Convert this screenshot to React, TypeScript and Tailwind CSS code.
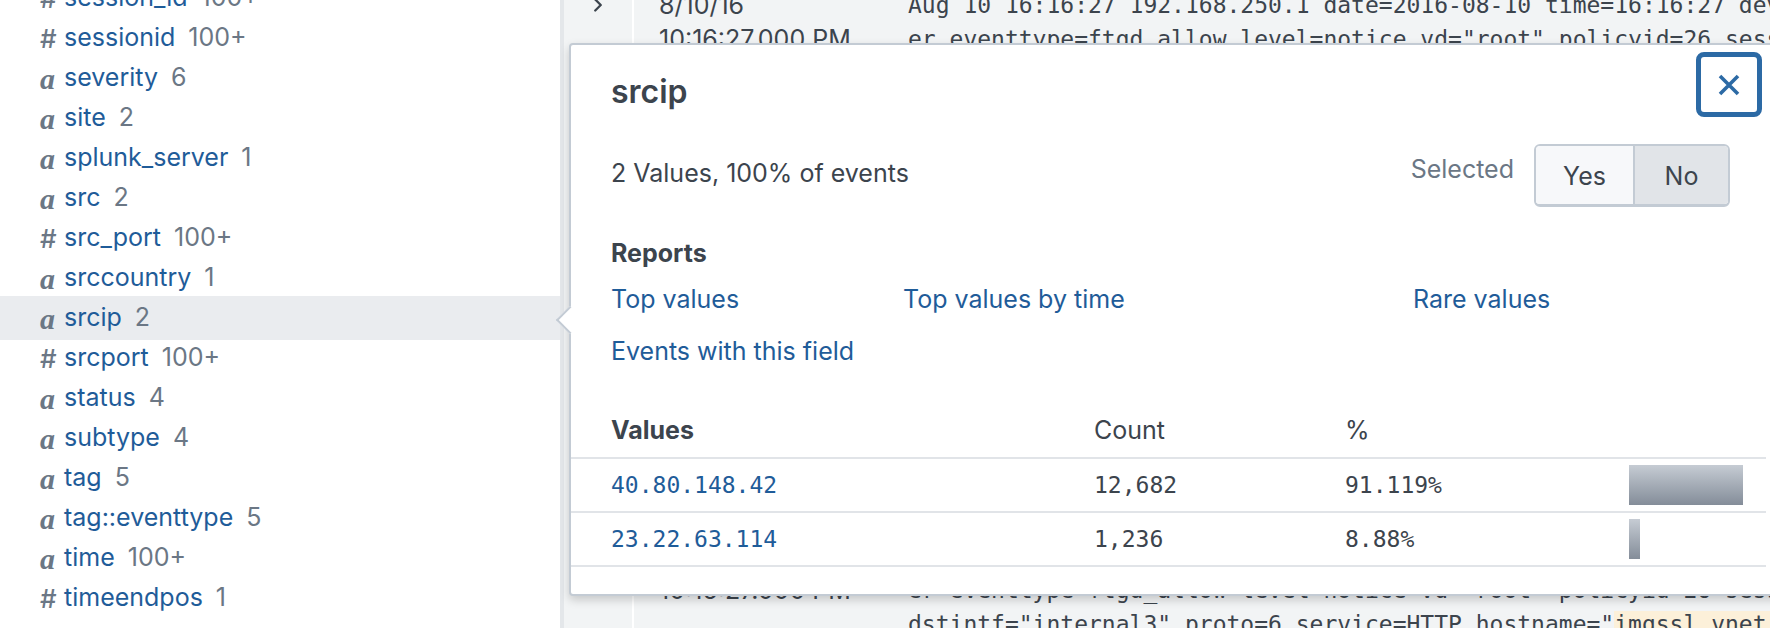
import { ChevronRight } from 'lucide-react'

const fields = [
  { type: '#', name: 'session_id', count: '100+' },
  { type: '#', name: 'sessionid', count: '100+' },
  { type: 'a', name: 'severity', count: '6' },
  { type: 'a', name: 'site', count: '2' },
  { type: 'a', name: 'splunk_server', count: '1' },
  { type: 'a', name: 'src', count: '2' },
  { type: '#', name: 'src_port', count: '100+' },
  { type: 'a', name: 'srccountry', count: '1' },
  { type: 'a', name: 'srcip', count: '2', selected: true },
  { type: '#', name: 'srcport', count: '100+' },
  { type: 'a', name: 'status', count: '4' },
  { type: 'a', name: 'subtype', count: '4' },
  { type: 'a', name: 'tag', count: '5' },
  { type: 'a', name: 'tag::eventtype', count: '5' },
  { type: 'a', name: 'time', count: '100+' },
  { type: '#', name: 'timeendpos', count: '1' },
]

const rawLines = [
  'Aug 10 16:16:27 192.168.250.1 date=2016-08-10 time=16:16:27 devname=FGT60D4614044725 devid=FGT60D4614044725',
  'er eventtype=ftgd_allow level=notice vd="root" policyid=26 sessionid=1285726 user="" srcip=40.80.148.42',
  'srcport=50964 srcintf="internal3" dstip=23.22.63.114 dstport=80 dstintf="wan1" proto=6 service=HTTP',
  'hostname="www.imreallynotbatman.com" profile="default" action=passthrough reqtype=direct',
  'url="/joomla/index.php" sentbyte=482 rcvdbyte=0 direction=outgoing msg="URL belongs to an allowed',
  'category in policy" method=domain cat=52 catdesc="Information Technology"',
  'crscore=0 craction=0 crlevel=low',
  '',
  '',
  '',
  '',
  '',
  '',
  '',
  '',
  '',
  'Aug 10 16:16:26 192.168.250.1 date=2016-08-10 time=16:16:26 devname=FGT60D4614044725 devid=FGT60D4614044725',
  'er eventtype=ftgd_allow level=notice vd="root" policyid=26 sessionid=1285701 user="" srcip=23.22.63.114',
]

const values = [
  { value: '40.80.148.42', count: '12,682', pct: 91.119, label: '91.119%' },
  { value: '23.22.63.114', count: '1,236', pct: 8.88, label: '8.88%' },
]

function TypeIcon({ type }: { type: string }) {
  if (type === '#') {
    return <span className="w-[24px] text-[26px] font-medium text-[#6b7785]">#</span>
  }
  return (
    <span className="w-[24px] font-[family-name:Liberation_Serif,serif] text-[30px] font-bold italic text-[#6b7785]">
      a
    </span>
  )
}

export default function App() {
  return (
    <div className="relative flex h-[628px] w-[1770px] overflow-hidden bg-white font-[family-name:Inter,Liberation_Sans,sans-serif] text-[#3c444d]">
      {/* field sidebar */}
      <aside className="w-[564px] shrink-0 border-r-4 border-[#e4e7ea] bg-white">
        <ul className="-mt-[22px]">
          {fields.map((field) => (
            <li
              key={field.name}
              className={`flex items-center pl-[40px] ${
                field.selected ? '-my-[2px] h-[44px] bg-[#eaecef]' : 'h-[40px]'
              }`}
            >
              <TypeIcon type={field.type} />
              <span className="text-[25px] text-[#1f5c99]">{field.name}</span>
              <span className="ml-[13px] text-[25px] text-[#6b7785]">{field.count}</span>
            </li>
          ))}
        </ul>
      </aside>

      {/* events list behind the popover */}
      <section className="flex flex-1 overflow-hidden bg-[#f2f4f5]">
        <div className="-mt-[12px] w-[70px] shrink-0 border-r-2 border-white">
          {rawLines.map((_, i) => (
            <div key={i} className="flex h-[34.4px] items-center justify-center">
              {(i === 0 || i === 16) && (
                <ChevronRight size={22} strokeWidth={2.5} className="text-[#3c444d]" />
              )}
            </div>
          ))}
        </div>
        <div className="-mt-[12px] w-[274px] shrink-0 pl-[25px] text-[25px]">
          {rawLines.map((_, i) => (
            <div key={i} className="h-[34.4px] whitespace-nowrap leading-[34.4px]">
              {i === 0 || i === 16 ? '8/10/16' : i === 1 || i === 17 ? '10:16:27.000 PM' : ''}
            </div>
          ))}
        </div>
        <div className="-mt-[12px] flex-1 font-[family-name:DejaVu_Sans_Mono,monospace] text-[23px]">
          {rawLines.map((line, i) => (
            <div key={i} className="h-[34.4px] whitespace-nowrap leading-[34.4px]">
              {line}
            </div>
          ))}
          <div className="h-[34.4px] whitespace-nowrap leading-[34.4px]">
            dstintf="internal3" proto=6 service=HTTP hostname="
            <span className="bg-[#fcf0d9]">imgssl.vnet.com</span>" profile="default"
          </div>
        </div>
      </section>

      {/* field summary popover */}
      <div className="absolute left-[569px] top-[43px] flex h-[553px] w-[1215px] flex-col rounded-[4px] border-2 border-[#c3cbd4] bg-white shadow-[0_4px_10px_rgba(0,0,0,0.18)]">
        <div className="absolute left-[-11px] top-[265px] h-[20px] w-[20px] rotate-45 border-b-2 border-l-2 border-[#c3cbd4] bg-white" />

        <div className="flex items-start">
          <h2 className="ml-[40px] mt-[27px] text-[32px] font-semibold leading-[40px]">srcip</h2>
          <button className="ml-auto mr-[20px] mt-[7px] flex h-[65px] w-[66px] items-center justify-center rounded-[8px] border-[5px] border-[#2c6aa5] bg-white">
            <svg width="24" height="24" viewBox="0 0 24 24" fill="none">
              <path d="M3 3 L21 21 M21 3 L3 21" stroke="#2c6aa5" strokeWidth="3.6" />
            </svg>
          </button>
        </div>

        <div className="mt-[27px] flex items-start">
          <p className="ml-[40px] mt-[12px] text-[25px] leading-[34px]">2 Values, 100% of events</p>
          <div className="ml-auto mr-[52px] flex items-start">
            <span className="mr-[20px] mt-[8px] text-[25px] leading-[34px] text-[#6b7785]">Selected</span>
            <div className="flex h-[63px] overflow-hidden rounded-[6px] border-2 border-b-[3px] border-[#c3cbd4] text-[25px]">
              <button className="w-[99px] border-r-2 border-[#c3cbd4] bg-[#f7f8fa] pt-[4px]">Yes</button>
              <button className="w-[93px] bg-[#e1e4e8] pt-[4px]">No</button>
            </div>
          </div>
        </div>

        <h3 className="ml-[40px] mt-[29px] text-[25px] font-bold leading-[34px]">Reports</h3>
        <div className="ml-[40px] mt-[12px] grid grid-cols-[292px_510px_1fr] gap-y-[18px] text-[25px] leading-[34px] text-[#1f5c99]">
          <a>Top values</a>
          <a>Top values by time</a>
          <a>Rare values</a>
          <a>Events with this field</a>
        </div>

        <div className="mr-[16px] mt-[36px]">
          <div className="grid h-[55px] grid-cols-[523px_251px_284px_1fr] items-center border-b-2 border-[#e1e4e8] text-[25px]">
            <span className="pl-[40px] font-bold">Values</span>
            <span>Count</span>
            <span>%</span>
            <span />
          </div>
          {values.map((row) => (
            <div
              key={row.value}
              className="grid h-[54px] grid-cols-[523px_251px_284px_1fr] items-center border-b-2 border-[#e1e4e8] font-[family-name:DejaVu_Sans_Mono,monospace] text-[23px]"
            >
              <span className="pl-[40px] text-[#1f5c99]">{row.value}</span>
              <span>{row.count}</span>
              <span>{row.label}</span>
              <span
                className="h-[40px] bg-linear-to-b from-[#c6ccd4] to-[#848d99]"
                style={{ width: `${(row.pct / 100) * 125}px` }}
              />
            </div>
          ))}
        </div>
      </div>
    </div>
  )
}
